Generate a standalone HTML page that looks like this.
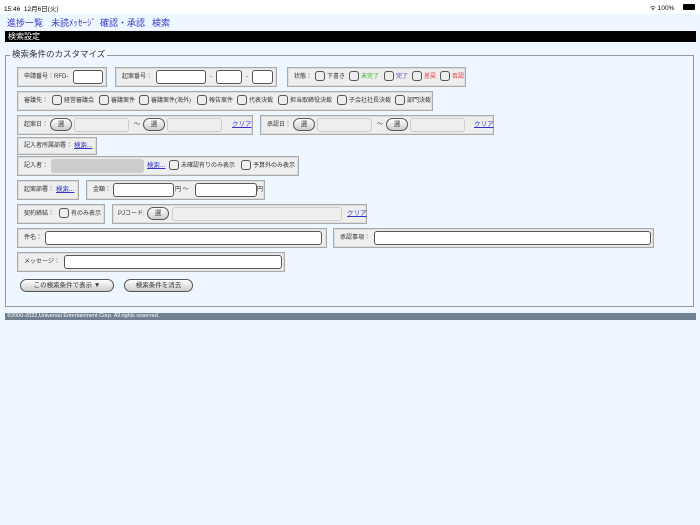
<!DOCTYPE html>
<html><head><meta charset="utf-8"><style>
*{margin:0;padding:0;box-sizing:border-box}
body{width:700px;height:525px;background:#eef6ff;font-family:"Liberation Sans","Noto Sans CJK JP",sans-serif;position:relative;overflow:hidden;color:#333}
.a{position:absolute}
.sb{left:0;top:0;width:700px;height:14px;background:#fff;font-size:6.5px;color:#000}
.nav{font-size:9px;color:#3939c8;top:16px}
.bar{left:5px;top:31px;width:691px;height:11px;background:#000;color:#fff;font-size:8px;line-height:11px;padding-left:3px}
.fs{left:5px;top:55px;width:689px;height:252px;border:1px solid #999}
.lg{left:10px;top:48px;font-size:8.5px;background:#eef6ff;padding:0 2px;color:#333}
.b{background:#eee;border:1px solid #aaa;box-shadow:inset 0 0 0 1px #ddd;font-size:6px;color:#333}
.t{position:absolute;font-size:6px;line-height:8px;white-space:nowrap}
.i{position:absolute;background:#fff;border:1px solid #555;border-radius:3px}
.g{position:absolute;background:#eee;border:1px solid #ccc;border-radius:3px}
.c{position:absolute;width:10px;height:10px;border:1px solid #555;border-radius:3px;background:#eee}
.p{position:absolute;border:1px solid #555;border-radius:7px;background:linear-gradient(#fff,#ccc);font-size:6.5px;text-align:center;line-height:11px;height:13px;white-space:nowrap}
.l{position:absolute;font-size:6.5px;color:#33c;text-decoration:underline;line-height:8px;white-space:nowrap}
</style></head><body>
<div class="a sb"><span class="a" style="left:4px;top:3px">15:46&nbsp;&nbsp;12月6日(火)</span><span class="a" style="left:650px;top:3px">ᯤ 100%</span><span class="a" style="left:683px;top:4px;width:12px;height:6px;background:#000;border-radius:1px"></span></div>
<div class="a nav" style="left:7px">進捗一覧</div>
<div class="a nav" style="left:51px">未読ﾒｯｾｰｼﾞ</div>
<div class="a nav" style="left:100px">確認・承認</div>
<div class="a nav" style="left:152px">検索</div>
<div class="a bar">検索設定</div>
<div class="a fs"></div>
<div class="a lg">検索条件のカスタマイズ</div>

<div class="a b" style="left:17px;top:67px;width:90px;height:20px"><span class="t" style="left:6px;top:5px">申請番号：RFD-</span><div class="i" style="left:55px;top:2px;width:30px;height:14px"></div></div>
<div class="a b" style="left:115px;top:67px;width:162px;height:20px"><span class="t" style="left:6px;top:5px">起案番号：</span><div class="i" style="left:40px;top:2px;width:50px;height:14px"></div><span class="t" style="left:94px;top:5px">-</span><div class="i" style="left:100px;top:2px;width:26px;height:14px"></div><span class="t" style="left:130px;top:5px">-</span><div class="i" style="left:136px;top:2px;width:21px;height:14px"></div></div>
<div class="a b" style="left:287px;top:67px;width:179px;height:20px"><span class="t" style="left:6px;top:5px">状態：</span>
<div class="c" style="left:27px;top:3px"></div><span class="t" style="left:39px;top:5px">下書き</span>
<div class="c" style="left:61px;top:3px"></div><span class="t" style="left:73px;top:5px;color:#2a2">未完了</span>
<div class="c" style="left:96px;top:3px"></div><span class="t" style="left:108px;top:5px;color:#33c">完了</span>
<div class="c" style="left:124px;top:3px"></div><span class="t" style="left:136px;top:5px;color:#e33">差戻</span>
<div class="c" style="left:152px;top:3px"></div><span class="t" style="left:164px;top:5px;color:#e33">否認</span></div>
<div class="a b" style="left:17px;top:91px;width:416px;height:20px"><span class="t" style="left:6px;top:5px">審議先：</span>
<div class="c" style="left:34px;top:3px"></div><span class="t" style="left:46px;top:5px">経営審議会</span>
<div class="c" style="left:81px;top:3px"></div><span class="t" style="left:93px;top:5px">審議案件</span>
<div class="c" style="left:121px;top:3px"></div><span class="t" style="left:133px;top:5px">審議案件(海外)</span>
<div class="c" style="left:179px;top:3px"></div><span class="t" style="left:191px;top:5px">報告案件</span>
<div class="c" style="left:219px;top:3px"></div><span class="t" style="left:231px;top:5px">代表決裁</span>
<div class="c" style="left:260px;top:3px"></div><span class="t" style="left:272px;top:5px">担当取締役決裁</span>
<div class="c" style="left:319px;top:3px"></div><span class="t" style="left:331px;top:5px">子会社社長決裁</span>
<div class="c" style="left:377px;top:3px"></div><span class="t" style="left:389px;top:5px">部門決裁</span></div>
<div class="a b" style="left:17px;top:115px;width:236px;height:20px"><span class="t" style="left:6px;top:5px">起案日：</span><div class="p" style="left:32px;top:2px;width:22px">選</div><div class="g" style="left:56px;top:2px;width:55px;height:14px"></div><span class="t" style="left:116px;top:5px">～</span><div class="p" style="left:125px;top:2px;width:22px">選</div><div class="g" style="left:149px;top:2px;width:55px;height:14px"></div><span class="l" style="left:214px;top:5px">クリア</span></div>
<div class="a b" style="left:260px;top:115px;width:234px;height:20px"><span class="t" style="left:6px;top:5px">承認日：</span><div class="p" style="left:32px;top:2px;width:22px">選</div><div class="g" style="left:56px;top:2px;width:55px;height:14px"></div><span class="t" style="left:116px;top:5px">～</span><div class="p" style="left:125px;top:2px;width:22px">選</div><div class="g" style="left:149px;top:2px;width:55px;height:14px"></div><span class="l" style="left:213px;top:5px">クリア</span></div>
<div class="a b" style="left:17px;top:137px;width:80px;height:18px"><span class="t" style="left:6px;top:4px">記入者所属部署：</span><span class="l" style="left:56px;top:4px">検索...</span></div>
<div class="a b" style="left:17px;top:156px;width:282px;height:20px"><span class="t" style="left:6px;top:5px">記入者：</span><div class="a" style="left:33px;top:2px;width:93px;height:14px;background:#ccc;border-radius:3px"></div><span class="l" style="left:129px;top:5px">検索...</span><div class="c" style="left:151px;top:3px"></div><span class="t" style="left:163px;top:5px">未確認有りのみ表示</span><div class="c" style="left:223px;top:3px"></div><span class="t" style="left:235px;top:5px">予算外のみ表示</span></div>
<div class="a b" style="left:17px;top:180px;width:62px;height:20px"><span class="t" style="left:6px;top:5px">起案部署：</span><span class="l" style="left:38px;top:5px">検索...</span></div>
<div class="a b" style="left:86px;top:180px;width:179px;height:20px"><span class="t" style="left:6px;top:5px">金額：</span><div class="i" style="left:26px;top:2px;width:61px;height:14px"></div><span class="t" style="left:88px;top:5px">円 ～</span><div class="i" style="left:108px;top:2px;width:62px;height:14px"></div><span class="t" style="left:170px;top:5px">円</span></div>
<div class="a b" style="left:17px;top:204px;width:88px;height:20px"><span class="t" style="left:6px;top:5px">契約締結：</span><div class="c" style="left:41px;top:3px"></div><span class="t" style="left:53px;top:5px">有のみ表示</span></div>
<div class="a b" style="left:112px;top:204px;width:255px;height:20px"><span class="t" style="left:5px;top:5px">PJコード:</span><div class="p" style="left:34px;top:2px;width:22px">選</div><div class="g" style="left:59px;top:2px;width:170px;height:14px"></div><span class="l" style="left:234px;top:5px">クリア</span></div>
<div class="a b" style="left:17px;top:228px;width:310px;height:20px"><span class="t" style="left:6px;top:5px">件名：</span><div class="i" style="left:27px;top:2px;width:277px;height:14px"></div></div>
<div class="a b" style="left:333px;top:228px;width:321px;height:20px"><span class="t" style="left:6px;top:5px">承認事項：</span><div class="i" style="left:40px;top:2px;width:277px;height:14px"></div></div>
<div class="a b" style="left:17px;top:252px;width:268px;height:20px"><span class="t" style="left:6px;top:5px">メッセージ：</span><div class="i" style="left:46px;top:2px;width:218px;height:14px"></div></div>
<div class="p" style="left:20px;top:279px;width:94px">この検索条件で表示 ▼</div>
<div class="p" style="left:124px;top:279px;width:69px">検索条件を消去</div>
<div class="a" style="left:5px;top:313px;width:691px;height:7px;background:#708090;color:#fff;font-size:5.5px;line-height:7px;padding-left:2px">©2000-2022,Universal Entertainment Corp. All rights reserved.</div>
</body></html>
